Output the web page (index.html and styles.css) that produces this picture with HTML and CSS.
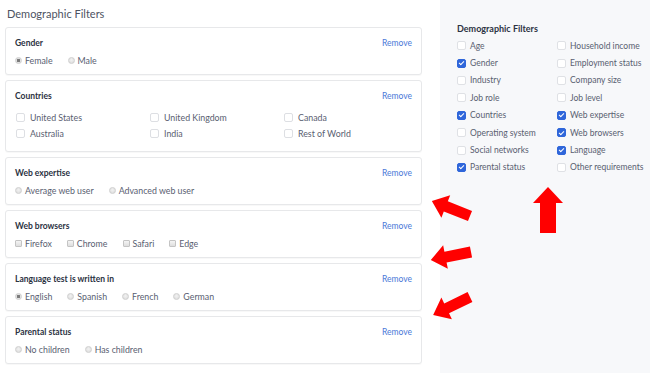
FILE: index.html
```html
<!DOCTYPE html>
<html>
<head>
<meta charset="utf-8">
<link rel="stylesheet" href="styles.css">
</head>
<body>
<div class="page">
  <main class="main">
    <h1 class="title">Demographic Filters</h1>

    <section class="card">
      <div class="card-head"><span class="card-title">Gender</span><a class="remove">Remove</a></div>
      <div class="opts">
        <span class="opt"><i class="radio on"></i>Female</span>
        <span class="opt"><i class="radio"></i>Male</span>
      </div>
    </section>

    <section class="card card-tall">
      <div class="card-head"><span class="card-title">Countries</span><a class="remove">Remove</a></div>
      <div class="grid3">
        <span class="opt"><i class="box"></i>United States</span>
        <span class="opt"><i class="box"></i>United Kingdom</span>
        <span class="opt"><i class="box"></i>Canada</span>
        <span class="opt"><i class="box"></i>Australia</span>
        <span class="opt"><i class="box"></i>India</span>
        <span class="opt"><i class="box"></i>Rest of World</span>
      </div>
    </section>

    <section class="card">
      <div class="card-head"><span class="card-title">Web expertise</span><a class="remove">Remove</a></div>
      <div class="opts">
        <span class="opt"><i class="radio"></i>Average web user</span>
        <span class="opt"><i class="radio"></i>Advanced web user</span>
      </div>
    </section>

    <section class="card">
      <div class="card-head"><span class="card-title">Web browsers</span><a class="remove">Remove</a></div>
      <div class="opts">
        <span class="opt"><i class="sbox"></i>Firefox</span>
        <span class="opt"><i class="sbox"></i>Chrome</span>
        <span class="opt"><i class="sbox"></i>Safari</span>
        <span class="opt"><i class="sbox"></i>Edge</span>
      </div>
    </section>

    <section class="card">
      <div class="card-head"><span class="card-title">Language test is written in</span><a class="remove">Remove</a></div>
      <div class="opts">
        <span class="opt"><i class="radio on"></i>English</span>
        <span class="opt"><i class="radio"></i>Spanish</span>
        <span class="opt"><i class="radio"></i>French</span>
        <span class="opt"><i class="radio"></i>German</span>
      </div>
    </section>

    <section class="card">
      <div class="card-head"><span class="card-title">Parental status</span><a class="remove">Remove</a></div>
      <div class="opts">
        <span class="opt"><i class="radio"></i>No children</span>
        <span class="opt"><i class="radio"></i>Has children</span>
      </div>
    </section>
  </main>

  <aside class="side">
    <h2 class="side-title">Demographic Filters</h2>
    <div class="side-grid">
      <span class="sopt"><i class="cb"></i>Age</span>
      <span class="sopt"><i class="cb"></i>Household income</span>
      <span class="sopt"><i class="cb on"></i>Gender</span>
      <span class="sopt"><i class="cb"></i>Employment status</span>
      <span class="sopt"><i class="cb"></i>Industry</span>
      <span class="sopt"><i class="cb"></i>Company size</span>
      <span class="sopt"><i class="cb"></i>Job role</span>
      <span class="sopt"><i class="cb"></i>Job level</span>
      <span class="sopt"><i class="cb on"></i>Countries</span>
      <span class="sopt"><i class="cb on"></i>Web expertise</span>
      <span class="sopt"><i class="cb"></i>Operating system</span>
      <span class="sopt"><i class="cb on"></i>Web browsers</span>
      <span class="sopt"><i class="cb"></i>Social networks</span>
      <span class="sopt"><i class="cb on"></i>Language</span>
      <span class="sopt"><i class="cb on"></i>Parental status</span>
      <span class="sopt"><i class="cb"></i>Other requirements</span>
    </div>
  </aside>

  <svg class="arrows" width="650" height="373" viewBox="0 0 650 373">
    <g fill="#ff0000">
      <polygon transform="translate(470,216) rotate(-158.5)" points="0,-5.5 26,-5.5 26,-12 41,0 26,12 26,5.5 0,5.5"/>
      <polygon transform="translate(471,252) rotate(168.7)" points="0,-5.5 26,-5.5 26,-12 41,0 26,12 26,5.5 0,5.5"/>
      <polygon transform="translate(470,297) rotate(154)" points="0,-5.5 26,-5.5 26,-12 41,0 26,12 26,5.5 0,5.5"/>
      <polygon points="540,233 540,203 533,203 548,187 563,203 556,203 556,233"/>
    </g>
  </svg>
</div>
</body>
</html>
```

FILE: styles.css
```css
* { box-sizing: border-box; }
html, body { margin: 0; padding: 0; }
body {
  font-family: Lato, "Open Sans", sans-serif;
  background: #fff;
  width: 650px;
  height: 373px;
  overflow: hidden;
}
.page {
  position: relative;
  display: flex;
  width: 650px;
  height: 373px;
}
.main {
  width: 440px;
  padding: 6px 18px 0 5px;
  display: flex;
  flex-direction: column;
  gap: 5px;
}
.title {
  margin: 0 0 0 2px;
  font-size: 11px;
  font-weight: 400;
  line-height: 16px;
  color: #4d5362;
}
.card {
  height: 48px;
  border: 1px solid #e7e8ea;
  border-radius: 3px;
  box-shadow: 0 1px 1px rgba(0,0,0,0.03);
  padding: 8px 9px 0 9px;
  background: #fff;
}
.card-tall { height: 72px; }
.card-head {
  display: flex;
  justify-content: space-between;
  align-items: center;
  height: 14px;
}
.card-title {
  font-size: 8.5px;
  font-weight: 700;
  color: #2b3242;
}
.remove {
  font-size: 8.5px;
  color: #4a78d8;
  cursor: pointer;
}
.opts {
  display: flex;
  gap: 15px;
  margin-top: 3px;
  height: 14px;
  align-items: center;
}
.opt {
  display: inline-flex;
  align-items: center;
  font-size: 8.8px;
  color: #596071;
  white-space: nowrap;
}
.radio {
  display: inline-block;
  width: 7px;
  height: 7px;
  border-radius: 50%;
  background: radial-gradient(circle at 50% 40%, #f2f2f2, #d9d9d9);
  border: 1px solid #cfcfcf;
  margin-right: 3px;
  position: relative;
}
.radio.on {
  background: radial-gradient(circle, #7b7b7b 0 1.4px, #e2e2e2 1.8px);
}
.grid3 {
  display: grid;
  grid-template-columns: 134px 134px 134px;
  grid-auto-rows: 16px;
  margin-top: 6px;
  align-items: center;
}
.box {
  display: inline-block;
  width: 9px;
  height: 9px;
  border: 1px solid #dddfe3;
  border-radius: 2px;
  background: #fff;
  margin: 0 5px 0 1px;
}
.sbox {
  display: inline-block;
  width: 7px;
  height: 7px;
  border: 1px solid #c4c4c4;
  background: linear-gradient(#f4f4f4, #dedede);
  border-radius: 1px;
  margin-right: 3px;
}
.side {
  flex: 1;
  background: #f7f8fa;
  padding: 23px 0 0 17px;
}
.side-title {
  margin: 0 0 2px 0;
  font-size: 9px;
  font-weight: 700;
  line-height: 12px;
  color: #2c3343;
}
.side-grid {
  display: grid;
  grid-template-columns: 100px 100px;
  grid-auto-rows: 17.4px;
  align-items: center;
}
.sopt {
  display: inline-flex;
  align-items: center;
  font-size: 8.5px;
  color: #596071;
  white-space: nowrap;
}
.cb {
  display: inline-block;
  width: 9px;
  height: 9px;
  border: 1px solid #dfe1e5;
  border-radius: 2px;
  background: #fff;
  margin-right: 4px;
  position: relative;
}
.cb.on {
  background: #2f66da;
  border-color: #2f66da;
}
.cb.on::after {
  content: "";
  position: absolute;
  left: 2px;
  top: 0.5px;
  width: 2px;
  height: 4px;
  border: solid #fff;
  border-width: 0 1.2px 1.2px 0;
  transform: rotate(45deg);
}
.arrows {
  position: absolute;
  left: 0;
  top: 0;
  pointer-events: none;
}
```
